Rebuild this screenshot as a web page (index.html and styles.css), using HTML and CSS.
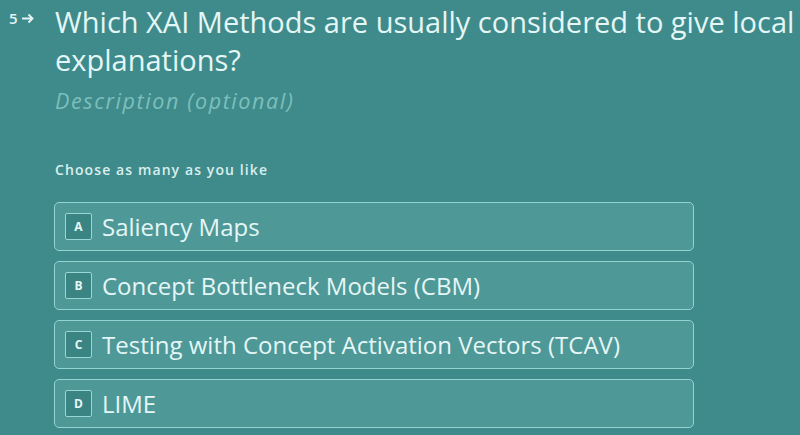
FILE: index.html
```html
<!DOCTYPE html>
<html>
<head>
<meta charset="utf-8">
<link rel="stylesheet" href="styles.css">
</head>
<body>
<div class="page">
  <div class="question">
    <div class="num">5<svg class="arrow" width="14" height="11" viewBox="0 0 14 11"><path d="M1 5.5h11M7.5 1.5l4 4-4 4" fill="none" stroke="currentColor" stroke-width="1.9"/></svg></div>
    <div class="content">
      <h1 class="title">Which XAI Methods are usually considered to give local explanations?</h1>
      <p class="desc">Description (optional)</p>
      <p class="hint">Choose as many as you like</p>
      <div class="options">
        <div class="option"><span class="key">A</span><span class="label">Saliency Maps</span></div>
        <div class="option"><span class="key">B</span><span class="label">Concept Bottleneck Models (CBM)</span></div>
        <div class="option"><span class="key">C</span><span class="label">Testing with Concept Activation Vectors (TCAV)</span></div>
        <div class="option"><span class="key">D</span><span class="label">LIME</span></div>
      </div>
    </div>
  </div>
</div>
</body>
</html>
```
FILE: styles.css
```css
html, body {
  margin: 0;
  padding: 0;
  background: #3f8b8b;
  height: 100%;
  overflow: hidden;
}
.page {
  padding: 3px 0 0 9px;
  font-family: "Open Sans", "Liberation Sans", sans-serif;
  color: #e2f5f4;
}
.question {
  display: flex;
  align-items: flex-start;
}
.num {
  width: 46px;
  flex: none;
  font-size: 15px;
  font-weight: 600;
  line-height: 16px;
  margin-top: 7px;
  display: flex;
  align-items: center;
  gap: 3px;
}
.content {
  flex: 1;
}
.title {
  margin: 0;
  font-size: 29px;
  font-weight: 500;
  line-height: 38px;
  color: #e4f6f5;
}
.desc {
  margin: 8px 0 0;
  font-size: 21.5px;
  font-style: italic;
  letter-spacing: 1.6px;
  line-height: 28px;
  color: #7dbfbd;
}
.hint {
  margin: 46px 0 0;
  font-size: 14px;
  font-weight: 600;
  letter-spacing: 1.1px;
  line-height: 18px;
  color: #d8efee;
}
.options {
  margin-top: 23px;
  width: 640px;
  display: flex;
  flex-direction: column;
  gap: 10px;
  margin-left: -1px;
}
.option {
  height: 49px;
  box-sizing: border-box;
  border: 1.5px solid #93d3d2;
  border-radius: 5px;
  background: #4f9898;
  display: flex;
  align-items: center;
  padding-left: 10px;
  gap: 10px;
}
.key {
  width: 27px;
  height: 27px;
  box-sizing: border-box;
  border: 1px solid #9ad6d5;
  border-radius: 2px;
  background: #3b8484;
  font-size: 12px;
  font-weight: 700;
  display: flex;
  align-items: center;
  justify-content: center;
  color: #e6f7f6;
}
.label {
  font-size: 24px;
  color: #e4f6f5;
}
```
